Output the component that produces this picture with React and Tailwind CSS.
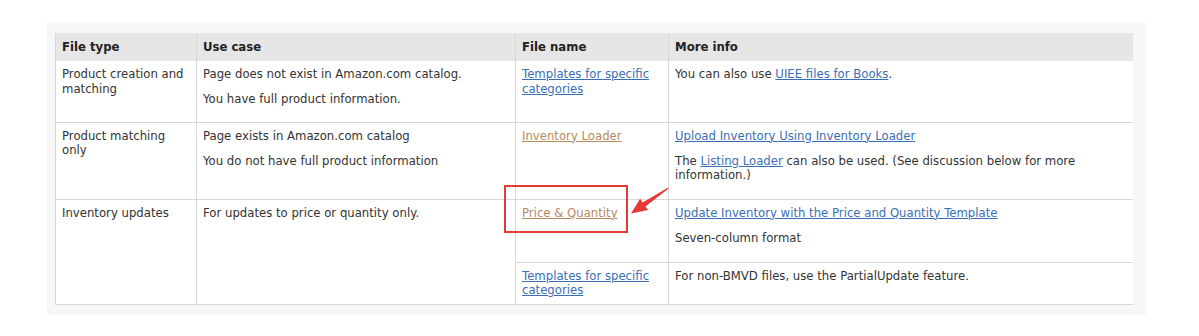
import React from 'react';

const link = 'text-[#3b6fb5] underline';
const visited = 'text-[#b98a5e] underline';

const App = () => {
    const cell = 'align-top border-l border-b border-[#d8d8d8] px-[6px] pt-[6px] pb-[6px]';
    const head = 'text-left font-bold text-[#222] border-l border-[#d8d8d8] px-[6px] h-[28px] align-middle';

    return (
        <div className="w-[1199px] h-[336px] bg-white pt-[22px] pl-[47px]" style={{ fontFamily: '"DejaVu Sans", Verdana, sans-serif' }}>
            <div className="relative w-[1099px] h-[293px] bg-[#f7f7f7] pt-[11px] pl-[8px]">
                <table className="table-fixed border-collapse bg-white text-[11.7px] leading-[14.5px] text-[#333] w-[1077px]">
                    <colgroup>
                        <col className="w-[141px]" />
                        <col className="w-[319px]" />
                        <col className="w-[153px]" />
                        <col className="w-[464px]" />
                    </colgroup>
                    <thead>
                        <tr className="bg-[#e6e6e6]">
                            <th className={head}>File type</th>
                            <th className={head}>Use case</th>
                            <th className={head}>File name</th>
                            <th className={head}>More info</th>
                        </tr>
                    </thead>
                    <tbody>
                        <tr className="h-[61px]">
                            <td className={cell}>Product creation and matching</td>
                            <td className={cell}>
                                <p className="mb-[10.5px]">Page does not exist in Amazon.com catalog.</p>
                                <p>You have full product information.</p>
                            </td>
                            <td className={cell}><span className={link}>Templates for specific categories</span></td>
                            <td className={cell}>You can also use <span className={link}>UIEE files for Books</span>.</td>
                        </tr>
                        <tr className="h-[77px]">
                            <td className={cell}>Product matching only</td>
                            <td className={cell}>
                                <p className="mb-[10.5px]">Page exists in Amazon.com catalog</p>
                                <p>You do not have full product information</p>
                            </td>
                            <td className={cell}><span className={visited}>Inventory Loader</span></td>
                            <td className={cell}>
                                <p className="mb-[10.5px]"><span className={link}>Upload Inventory Using Inventory Loader</span></p>
                                <p>The <span className={link}>Listing Loader</span> can also be used. (See discussion below for more information.)</p>
                            </td>
                        </tr>
                        <tr className="h-[63px]">
                            <td className={cell} rowSpan={2}>Inventory updates</td>
                            <td className={cell} rowSpan={2}>For updates to price or quantity only.</td>
                            <td className={cell}><span className={visited}>Price &amp; Quantity</span></td>
                            <td className={cell}>
                                <p className="mb-[10.5px]"><span className={link}>Update Inventory with the Price and Quantity Template</span></p>
                                <p>Seven-column format</p>
                            </td>
                        </tr>
                        <tr className="h-[40px]">
                            <td className={cell}><span className={link}>Templates for specific categories</span></td>
                            <td className={cell}>For non-BMVD files, use the PartialUpdate feature.</td>
                        </tr>
                    </tbody>
                </table>

                {/* red highlight box and arrow */}
                <div className="absolute left-[457px] top-[163px] w-[124px] h-[48px] border-2 border-[#e53935]" />
                <svg className="absolute left-[578px] top-[163px]" width="47" height="33" viewBox="0 0 47 33">
                    <polygon
                        points="42.7,2.8 17.7,17.4 15.1,13.7 6,28.5 23.1,25.1 20.5,21.4 43.6,3.6"
                        fill="#e53935"
                    />
                </svg>
            </div>
        </div>
    );
};

export default App;
